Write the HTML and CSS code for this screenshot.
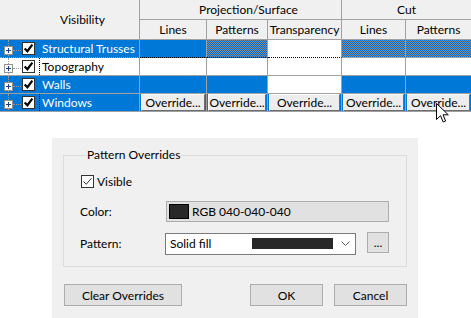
FILE: index.html
```html
<!DOCTYPE html>
<html>
<head>
<meta charset="utf-8">
<link rel="stylesheet" href="styles.css">
</head>
<body>
<table class="vg">
  <colgroup>
    <col class="c-vis"><col class="c-lines"><col class="c-pat"><col class="c-tr"><col class="c-clines"><col class="c-cpat">
  </colgroup>
  <thead>
    <tr class="h1">
      <th rowspan="2" class="th-vis">Visibility</th>
      <th colspan="3" class="th-proj">Projection/Surface</th>
      <th colspan="2">Cut</th>
    </tr>
    <tr class="h2">
      <th>Lines</th><th>Patterns</th><th>Transparency</th><th>Lines</th><th>Patterns</th>
    </tr>
  </thead>
  <tbody>
    <tr class="sel first">
      <td class="name"><span class="tree"><span class="plus"></span><span class="dots"></span><span class="cb"><svg viewBox="0 0 10 10"><path d="M1.5 5 L4 7.5 L8.5 1.5" /></svg></span></span><span class="label">Structural Trusses</span></td>
      <td class="fb"></td><td class="hatch fb"></td><td class="white fb"></td><td class="hatch"></td><td class="hatch"></td>
    </tr>
    <tr>
      <td class="name"><span class="tree"><span class="plus"></span><span class="dots"></span><span class="cb"><svg viewBox="0 0 10 10"><path d="M1.5 5 L4 7.5 L8.5 1.5" /></svg></span></span><span class="label focus">Topography</span></td>
      <td></td><td></td><td></td><td></td><td></td>
    </tr>
    <tr class="sel">
      <td class="name"><span class="tree"><span class="plus"></span><span class="dots"></span><span class="cb"><svg viewBox="0 0 10 10"><path d="M1.5 5 L4 7.5 L8.5 1.5" /></svg></span></span><span class="label">Walls</span></td>
      <td></td><td></td><td class="white"></td><td></td><td></td>
    </tr>
    <tr class="sel btnrow">
      <td class="name"><span class="tree"><span class="plus"></span><span class="dots"></span><span class="cb"><svg viewBox="0 0 10 10"><path d="M1.5 5 L4 7.5 L8.5 1.5" /></svg></span></span><span class="label focus">Windows</span></td>
      <td class="bc"><span class="ovr">Override...</span></td>
      <td class="bc"><span class="ovr">Override...</span></td>
      <td class="bc"><span class="ovr">Override...</span></td>
      <td class="bc"><span class="ovr">Override...</span></td>
      <td class="bc"><span class="ovr">Override...</span></td>
    </tr>
  </tbody>
</table>

<svg class="cursor" width="13" height="20" viewBox="0 0 13 20">
  <path d="M0.5 0.5 L0.5 16.5 L4.5 12.7 L7.2 19 L9.6 18 L7 11.8 L12.3 11.8 Z" fill="#fff" stroke="#000" stroke-width="1" stroke-linejoin="miter"/>
</svg>

<div class="dialog">
  <fieldset class="group">
    <legend>Pattern Overrides</legend>
    <div class="vis-row">
      <span class="dcb"><svg viewBox="0 0 11 11"><path d="M1.5 5.5 L4.2 8.3 L9.5 2.2" /></svg></span>
      <span>Visible</span>
    </div>
    <div class="frow color-row">
      <span class="flabel">Color:</span>
      <span class="colorbtn"><span class="swatch"></span><span>RGB 040-040-040</span></span>
    </div>
    <div class="frow pat-row">
      <span class="flabel">Pattern:</span>
      <span class="combo">
        <span class="ctext">Solid fill</span>
        <span class="cbar"></span>
        <svg class="chev" width="9" height="5" viewBox="0 0 9 5"><path d="M0.5 0.5 L4.5 4.5 L8.5 0.5" /></svg>
      </span>
      <span class="dots-btn">...</span>
    </div>
  </fieldset>
  <div class="buttons">
    <span class="btn clear">Clear Overrides</span>
    <span class="spacer"></span>
    <span class="btn ok">OK</span>
    <span class="btn cancel">Cancel</span>
  </div>
</div>
</body>
</html>
```

FILE: styles.css
```css
html, body {
  margin: 0;
  padding: 0;
  background: #fff;
  overflow: hidden;
  width: 471px;
  height: 318px;
}
body {
  font-family: Lato, "Noto Sans", sans-serif;
  font-size: 12px;
  color: #000;
  position: relative;
}

/* ---------- grid ---------- */
.vg {
  border-collapse: separate;
  border-spacing: 0;
  table-layout: fixed;
  width: 472px;
}
.c-vis { width: 140px; }
.c-lines { width: 67px; }
.c-pat { width: 61px; }
.c-tr { width: 74px; }
.c-clines { width: 64px; }
.c-cpat { width: 66px; }

.vg th, .vg td {
  padding: 0;
  border-right: 1px solid #a0a0a0;
  border-bottom: 1px solid #a0a0a0;
  font-weight: normal;
  white-space: nowrap;
  overflow: hidden;
}
.vg th {
  background: #f0f0f0;
  text-align: center;
  line-height: 16px;
}
.vg th.th-vis { padding-left: 26px; }
.vg th.th-proj { padding-left: 16px; }
.vg tr.h1 { height: 20px; }
.vg tr.h2 { height: 20px; }
.vg tbody tr { height: 18px; }
.vg td {
  line-height: 16px;
  background: #fff;
  text-align: left;
}
.vg td.bc { text-align: center; }
.vg tr.sel td { background: #0078d7; color: #fff; }
.vg tr.sel td.white { background: #fff; }
.vg tr.sel td.hatch {
  background: repeating-conic-gradient(#7f8c98 0 25%, #0a6fc8 0 50%) 0 0 / 2px 2px;
}
.vg tr.first td.fb { border-bottom: 1px dotted #000; }
.vg tr.first td.name { border-bottom: 1px dotted #a0a0a0; }

.name {
  position: relative;
}
.name .tree {
  display: inline-flex;
  align-items: center;
  vertical-align: top;
  height: 17px;
  padding-left: 4px;
}
.name::before {
  content: "";
  position: absolute;
  left: 8px;
  top: 0;
  bottom: -1px;
  border-left: 1px dotted #9a9a9a;
}
.plus {
  position: relative;
  z-index: 1;
  width: 7px;
  height: 7px;
  border: 1px solid #919191;
  background: #fff;
  margin-top: 4px;
}
.plus::before, .plus::after {
  content: "";
  position: absolute;
  background: #1d3f8c;
}
.plus::before { left: 1px; top: 3px; width: 5px; height: 1px; }
.plus::after { left: 3px; top: 1px; width: 1px; height: 5px; }
.dots {
  width: 8px;
  height: 0;
  border-top: 1px dotted #9a9a9a;
  margin-top: 4px;
}
.cb {
  width: 11px;
  height: 11px;
  border: 1px solid #333;
  background: #fff;
  margin-left: 1px;
  margin-top: -1px;
  display: flex;
}
.cb svg { width: 11px; height: 11px; }
.cb path { fill: none; stroke: #000; stroke-width: 2; }
.label {
  display: inline-block;
  vertical-align: top;
  margin-left: 4px;
  padding-left: 2px;
  height: 17px;
  line-height: 17px;
  border-left: 1px solid transparent;
}
.label.focus { border-left: 1px dotted #000; }

.ovr {
  display: block;
  margin: 0 1px;
  height: 15px;
  line-height: 15px;
  background: #ededed;
  color: #000;
  border-top: 1px solid #fff;
  border-left: 1px solid #fff;
  border-right: 1px solid #6d6d6d;
  border-bottom: 1px solid #6d6d6d;
  text-align: center;
}

.cursor {
  position: absolute;
  left: 436px;
  top: 103px;
}

/* ---------- dialog ---------- */
.dialog {
  margin: 26px 0 0 52px;
  width: 366px;
  height: 180px;
  box-sizing: border-box;
  background: #f0f0f0;
  padding: 9px 11px 0 11px;
}
.group {
  margin: 0;
  padding: 0 0 10px 16px;
  border: 1px solid #dcdcdc;
  height: 120px;
  box-sizing: border-box;
}
.group legend {
  padding: 0 1px;
  margin-left: 6px;
  line-height: 16px;
}
.vis-row {
  display: flex;
  align-items: center;
  margin-top: 12px;
  height: 13px;
  gap: 3px;
}
.dcb {
  width: 11px;
  height: 11px;
  border: 1px solid #333;
  background: #fff;
  display: flex;
  margin-left: 1px;
}
.dcb svg { width: 11px; height: 11px; }
.dcb path { fill: none; stroke: #333; stroke-width: 1; }

.frow {
  display: flex;
  align-items: center;
}
.flabel { width: 85px; }
.color-row { margin-top: 13px; height: 21px; }
.colorbtn {
  display: flex;
  align-items: center;
  width: 223px;
  height: 21px;
  box-sizing: border-box;
  margin-left: 1px;
  border: 1px solid #adadad;
  background: #e1e1e1;
  padding-left: 2px;
  gap: 3px;
}
.swatch {
  width: 20px;
  height: 15px;
  background: #282828;
  border: 1px solid #000;
  box-sizing: border-box;
}
.pat-row { margin-top: 10px; height: 23px; }
.combo {
  display: flex;
  align-items: center;
  width: 191px;
  height: 22px;
  box-sizing: border-box;
  border: 1px solid #7a7a7a;
  background: #fff;
  padding-left: 4px;
}
.ctext { width: 82px; }
.cbar {
  width: 81px;
  height: 11px;
  background: #282828;
}
.chev { margin-left: 8px; }
.chev path { fill: none; stroke: #606060; stroke-width: 1; }
.dots-btn {
  margin-left: 11px;
  width: 22px;
  height: 21px;
  box-sizing: border-box;
  border: 1px solid #adadad;
  background: #e1e1e1;
  text-align: center;
  line-height: 20px;
  margin-top: -2px;
}

.buttons {
  display: flex;
  margin-top: 17px;
  padding-left: 1px;
  height: 22px;
}
.btn {
  height: 22px;
  box-sizing: border-box;
  border: 1px solid #adadad;
  background: #e1e1e1;
  display: flex;
  align-items: center;
  justify-content: center;
}
.clear { width: 118px; }
.spacer { flex: 1; }
.ok { width: 73px; }
.cancel { width: 73px; margin-left: 11px; }
```
